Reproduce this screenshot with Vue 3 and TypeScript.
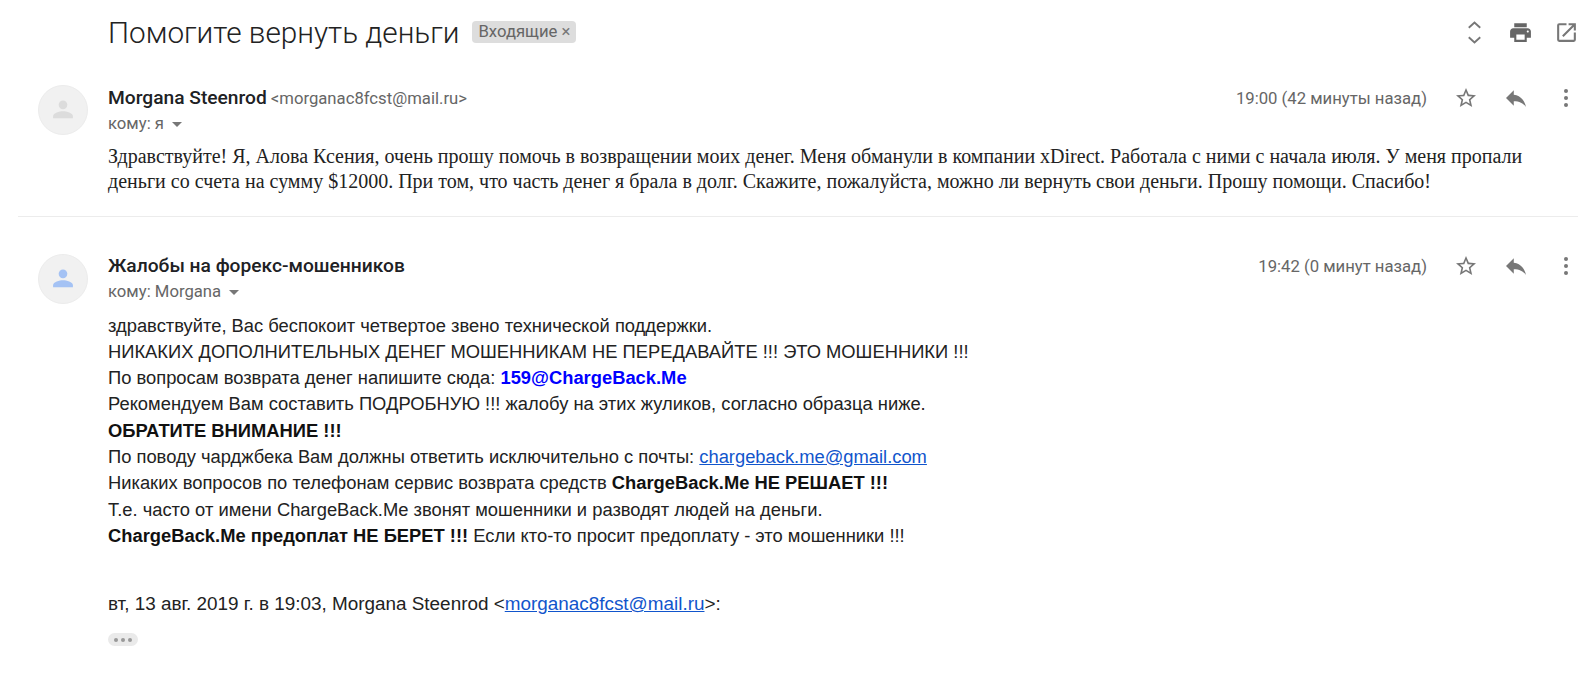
<template>
  <div class="thread">
    <header class="subject-row">
      <h1 class="subject">Помогите вернуть деньги</h1>
      <span class="label">Входящие <span class="label-x">×</span></span>
      <div class="subject-actions">
        <svg class="icon-lg" viewBox="0 0 24 24"><path d="M6.500 7.500 12 2.500l5.500 5M6.500 16.500 12 21.500l5.500-5" fill="none" stroke="#777" stroke-width="1.800" /></svg>
        <svg class="icon-lg" viewBox="0 0 24 24"><path d="M19 8H5c-1.660 0-3 1.340-3 3v6h4v4h12v-4h4v-6c0-1.660-1.340-3-3-3zm-3 11H8v-5h8v5zm3-7c-.550 0-1-.450-1-1s.450-1 1-1 1 .450 1 1-.450 1-1 1zM18 3H6v4h12V3z" fill="#666" /></svg>
        <svg class="icon-lg" viewBox="0 0 24 24"><path d="M19 19H5V5h7V3H5a2 2 0 0 0-2 2v14a2 2 0 0 0 2 2h14a2 2 0 0 0 2-2v-7h-2v7zM14 3v2h3.590l-9.830 9.830 1.410 1.410L19 6.410V10h2V3h-7z" fill="#777" /></svg>
      </div>
    </header>

    <section v-for="msg in messages" :key="msg.time" class="message" :class="{ second: msg.second }">
      <div class="avatar">
        <svg viewBox="0 0 24 24" width="28" height="28"><circle cx="12" cy="7.600" r="3.700" :fill="msg.avatarColor" /><path d="M3.500 19v-1.700c0-2.700 5.600-4.200 8.500-4.200s8.500 1.500 8.500 4.200V19z" :fill="msg.avatarColor" /></svg>
      </div>
      <div class="content">
        <div class="meta">
          <div class="sender">
            <b class="name">{{ msg.name }}</b>
            <span v-if="msg.email" class="email">&lt;{{ msg.email }}&gt;</span>
          </div>
          <span class="time">{{ msg.time }}</span>
          <div class="msg-actions">
            <svg class="icon" viewBox="0 0 24 24"><path d="M22 9.240l-7.190-.620L12 2 9.190 8.630 2 9.240l5.460 4.730L5.820 21 12 17.270 18.180 21l-1.630-7.030L22 9.240zM12 15.400l-3.760 2.270 1-4.280-3.320-2.880 4.380-.380L12 6.100l1.710 4.040 4.380.380-3.320 2.880 1 4.280L12 15.400z" fill="#777" /></svg>
            <svg class="icon" viewBox="1.200 1.200 21.600 21.600"><path d="M10 9V5l-7 7 7 7v-4.100c5 0 8.500 1.600 11 5.100-1-5-4-10-11-11z" fill="#777" /></svg>
            <svg class="icon" viewBox="0 0 24 24"><circle cx="12" cy="5" r="2" fill="#777" /><circle cx="12" cy="12" r="2" fill="#777" /><circle cx="12" cy="19" r="2" fill="#777" /></svg>
          </div>
        </div>
        <div class="recipient">{{ msg.to }} <i class="caret"></i></div>

        <p v-if="!msg.second" class="serif-body">
          Здравствуйте! Я, Алова Ксения, очень прошу помочь в возвращении моих денег. Меня обманули в компании xDirect. Работала с ними с начала июля. У меня пропали<br />деньги со счета на сумму $12000. При том, что часть денег я брала в долг. Скажите, пожалуйста, можно ли вернуть свои деньги. Прошу помощи. Спасибо!
        </p>

        <div v-else class="sans-body">
          <div>здравствуйте, Вас беспокоит четвертое звено технической поддержки.</div>
          <div>НИКАКИХ ДОПОЛНИТЕЛЬНЫХ ДЕНЕГ МОШЕННИКАМ НЕ ПЕРЕДАВАЙТЕ !!! ЭТО МОШЕННИКИ !!!</div>
          <div>По вопросам возврата денег напишите сюда: <b class="blue">159@ChargeBack.Me</b></div>
          <div>Рекомендуем Вам составить ПОДРОБНУЮ !!! жалобу на этих жуликов, согласно образца ниже.</div>
          <div><b>ОБРАТИТЕ ВНИМАНИЕ !!!</b></div>
          <div>По поводу чарджбека Вам должны ответить исключительно с почты: <a href="#">chargeback.me@gmail.com</a></div>
          <div>Никаких вопросов по телефонам сервис возврата средств <b>ChargeBack.Me НЕ РЕШАЕТ !!!</b></div>
          <div>Т.е. часто от имени ChargeBack.Me звонят мошенники и разводят людей на деньги.</div>
          <div><b>ChargeBack.Me предоплат НЕ БЕРЕТ !!!</b> Если кто-то просит предоплату - это мошенники !!!</div>
          <div class="quote-head">вт, 13 авг. 2019 г. в 19:03, Morgana Steenrod &lt;<a href="#">morganac8fcst@mail.ru</a>&gt;:</div>
          <div class="ellipsis"><i></i><i></i><i></i></div>
        </div>
      </div>
    </section>
  </div>
</template>

<script setup lang="ts">
interface Message {
  name: string;
  email?: string;
  to: string;
  time: string;
  avatarColor: string;
  second: boolean;
}

const messages: Message[] = [
  {
    name: 'Morgana Steenrod',
    email: 'morganac8fcst@mail.ru',
    to: 'кому: я',
    time: '19:00 (42 минуты назад)',
    avatarColor: '#dcdcdc',
    second: false,
  },
  {
    name: 'Жалобы на форекс-мошенников',
    to: 'кому: Morgana',
    time: '19:42 (0 минут назад)',
    avatarColor: '#a4c2f4',
    second: true,
  },
];
</script>

<style>
body {
  background: #fff;
}
</style>

<style scoped>
.thread {
  width: 1596px;
  height: 677px;
  overflow: hidden;
  font-family: Roboto, "Liberation Sans", sans-serif;
  color: #222;
}

.subject-row {
  display: flex;
  align-items: center;
  height: 32px;
  padding: 16px 17px 0 108px;
}

.subject {
  margin: 0;
  font-size: 29.700px;
  font-weight: 300;
  color: #222;
}

.label {
  margin-left: 13px;
  padding: 0 6px;
  height: 22px;
  line-height: 22px;
  border-radius: 4px;
  background: #ddd;
  color: #666;
  font-size: 16.700px;
}

.label-x {
  color: #777;
}

.subject-actions {
  display: flex;
  gap: 21px;
  margin-left: auto;
}

.icon-lg {
  width: 25px;
  height: 25px;
  display: block;
}

.icon {
  width: 24px;
  height: 24px;
  display: block;
}

.message {
  display: flex;
  margin: 37px 0 0 18px;
  padding-left: 20px;
  padding-bottom: 23px;
  border-bottom: 1px solid #ececec;
  width: 1560px;
  box-sizing: border-box;
}

.message.second {
  margin-top: 36px;
  border-bottom: none;
}

.message.second .avatar {
  margin-top: 1px;
}

.avatar {
  flex: none;
  width: 50px;
  height: 50px;
  border-radius: 50%;
  background: #f1f1f1;
  border: 1px solid #ececec;
  box-sizing: border-box;
  display: flex;
  align-items: center;
  justify-content: center;
}

.content {
  flex: 1;
  margin-left: 20px;
}

.meta {
  display: flex;
  align-items: center;
  height: 24px;
  margin-top: 1px;
}

.sender {
  flex: 1;
  font-size: 16.700px;
  line-height: 24px;
  padding-top: 1px;
}

.name {
  font-size: 19.200px;
  font-weight: 500;
  color: #202124;
}

.email {
  margin-left: 4px;
  color: #666;
}

.time {
  font-size: 16.700px;
  color: #666;
}

.msg-actions {
  display: flex;
  gap: 26px;
  margin-left: 27px;
}

.recipient {
  margin-top: 4px;
  font-size: 16.700px;
  line-height: 20px;
  color: #666;
}

.caret {
  display: inline-block;
  margin-left: 4px;
  vertical-align: middle;
  border: 5px solid transparent;
  border-top-color: #777;
  border-bottom: 0;
}

.serif-body {
  margin: 10px 0 0;
  font-family: "Liberation Serif", serif;
  font-size: 20px;
  line-height: 24.500px;
  color: #222;
}

.sans-body {
  margin-top: 10.500px;
  font-family: "Liberation Sans", sans-serif;
  font-size: 18.350px;
  line-height: 26.300px;
  color: #222;
}

.sans-body b {
  color: #111;
}

.sans-body .blue {
  color: #0000ff;
}

.sans-body a {
  color: #1155cc;
}

.quote-head {
  margin-top: 42px;
  font-size: 18.900px;
}

.ellipsis {
  display: flex;
  align-items: center;
  justify-content: center;
  gap: 3px;
  margin-top: 16px;
  width: 30px;
  height: 13px;
  border-radius: 7px;
  background: #eaeaea;
}

.ellipsis i {
  width: 4px;
  height: 4px;
  border-radius: 50%;
  background: #999;
}
</style>
